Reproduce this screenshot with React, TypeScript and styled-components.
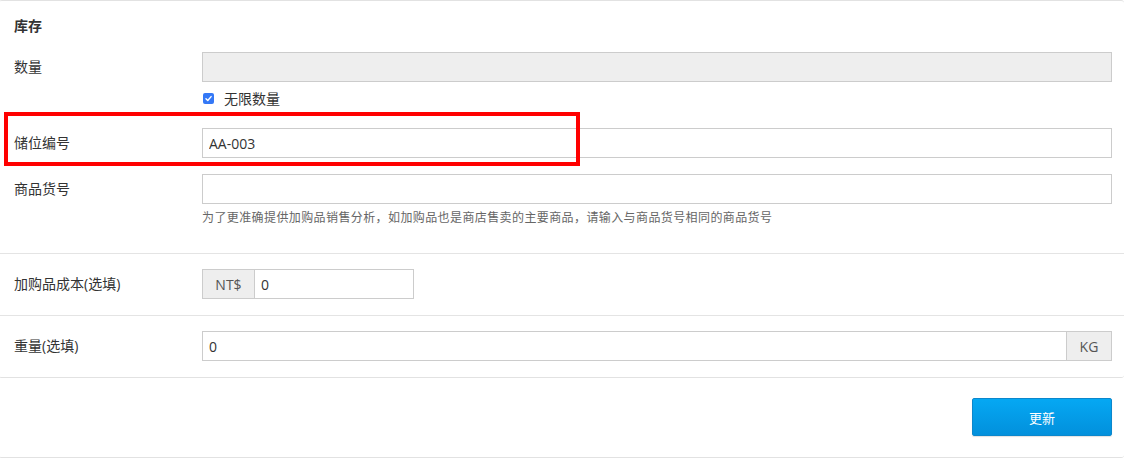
import React from "react";
import styled, { createGlobalStyle } from "styled-components";

const GlobalStyle = createGlobalStyle`
  html, body {
    margin: 0;
    padding: 0;
    background: #ffffff;
  }
  body {
    font-family: "Open Sans", "Noto Sans CJK SC", sans-serif;
    color: #333333;
    font-size: 14px;
  }
  * {
    box-sizing: border-box;
  }
`;

const Page = styled.div`
  position: relative;
  width: 1125px;
  overflow: hidden;
`;

const Card = styled.div`
  margin: 0 1px 0 -1px;
  border-top: 1px solid #e2e2e2;
  border-bottom: 1px solid #e2e2e2;
  border-radius: 3px;
  background: #ffffff;
`;

const Section = styled.div<{ $top?: number; $bottom?: number; $last?: boolean }>`
  padding: ${(p) => p.$top ?? 15}px 12px ${(p) => p.$bottom ?? 16}px 15px;
  border-bottom: ${(p) => (p.$last ? "none" : "1px solid #e4e4e4")};
`;

const Title = styled.div`
  font-weight: 700;
  font-size: 14px;
  line-height: 20px;
  height: 20px;
  margin-bottom: 16px;
  color: #333;
`;

const Row = styled.div<{ $gap?: number; $top?: boolean }>`
  display: flex;
  align-items: ${(p) => (p.$top ? "flex-start" : "center")};
  margin-bottom: ${(p) => p.$gap ?? 0}px;
`;

const Label = styled.div<{ $tall?: boolean }>`
  width: 188px;
  flex-shrink: 0;
  font-size: 14px;
  line-height: ${(p) => (p.$tall ? 30 : 20)}px;
  color: #333;
`;

const Field = styled.div`
  flex: 1;
  display: flex;
  flex-direction: column;
`;

const InputGroup = styled.div<{ $width?: number }>`
  display: flex;
  width: ${(p) => (p.$width ? `${p.$width}px` : "100%")};
  height: 30px;
`;

const Input = styled.input<{ $disabled?: boolean }>`
  flex: 1;
  min-width: 0;
  width: 100%;
  height: 30px;
  border: 1px solid #cccccc;
  background: ${(p) => (p.$disabled ? "#eeeeee" : "#ffffff")};
  padding: 0 6px;
  font-family: "Open Sans", "Noto Sans CJK SC", sans-serif;
  font-size: 14px;
  color: #333;
  outline: none;
  border-radius: 0;
`;

const Addon = styled.div<{ $width: number; $side: "left" | "right" }>`
  width: ${(p) => p.$width}px;
  flex-shrink: 0;
  height: 30px;
  display: flex;
  align-items: center;
  justify-content: center;
  background: #eeeeee;
  border: 1px solid #cccccc;
  ${(p) => (p.$side === "left" ? "border-right: none;" : "border-left: none;")}
  font-size: 14px;
  color: #555;
`;

const CheckRow = styled.label`
  display: flex;
  align-items: center;
  gap: 10px;
  height: 20px;
  margin-top: 6px;
  margin-bottom: 20px;
  padding-left: 1px;
  font-size: 14px;
  color: #333;
`;

const CheckBox = styled.span`
  width: 11px;
  height: 11px;
  border-radius: 2px;
  background: #3478f6;
  display: flex;
  align-items: center;
  justify-content: center;
`;

const Help = styled.div`
  margin-top: 5px;
  font-size: 12px;
  letter-spacing: 0.4px;
  line-height: 18px;
  color: #666;
`;

const Footer = styled.div`
  margin: 0 1px 0 -1px;
  padding: 20px 12px 21px 0;
  border-bottom: 1px solid #e2e2e2;
  border-radius: 3px;
  display: flex;
  justify-content: flex-end;
`;

const Button = styled.button`
  width: 140px;
  height: 38px;
  border: 1px solid #0b87cc;
  border-radius: 2px;
  background: linear-gradient(#05a8f3, #0290dc);
  box-shadow: 0 1px 1px rgba(0, 0, 0, 0.12);
  color: #ffffff;
  font-family: "Open Sans", "Noto Sans CJK SC", sans-serif;
  font-size: 13px;
`;

const Highlight = styled.div`
  position: absolute;
  left: 4px;
  top: 112px;
  width: 576px;
  height: 54px;
  border: 4px solid #ff0000;
  pointer-events: none;
`;

const App = () => {
  return (
    <Page>
      <GlobalStyle />
      <Card>
        <Section $bottom={26}>
          <Title>库存</Title>
          <Row>
            <Label>数量</Label>
            <Field>
              <InputGroup>
                <Input $disabled readOnly />
              </InputGroup>
            </Field>
          </Row>
          <Row>
            <Label />
            <Field>
              <CheckRow>
                <CheckBox>
                  <svg width="9" height="9" viewBox="0 0 10 10">
                    <path
                      d="M2.2 5.2 L4.2 7.2 L7.9 2.9"
                      fill="none"
                      stroke="#fff"
                      strokeWidth="1.6"
                      strokeLinecap="round"
                      strokeLinejoin="round"
                    />
                  </svg>
                </CheckBox>
                无限数量
              </CheckRow>
            </Field>
          </Row>
          <Row $gap={16}>
            <Label>储位编号</Label>
            <Field>
              <InputGroup>
                <Input defaultValue="AA-003" />
              </InputGroup>
            </Field>
          </Row>
          <Row $top>
            <Label $tall>商品货号</Label>
            <Field>
              <InputGroup>
                <Input />
              </InputGroup>
              <Help>
                为了更准确提供加购品销售分析，如加购品也是商店售卖的主要商品，请输入与商品货号相同的商品货号
              </Help>
            </Field>
          </Row>
        </Section>
        <Section>
          <Row>
            <Label>加购品成本(选填)</Label>
            <Field>
              <InputGroup $width={212}>
                <Addon $width={52} $side="left">
                  NT$
                </Addon>
                <Input defaultValue="0" />
              </InputGroup>
            </Field>
          </Row>
        </Section>
        <Section $last>
          <Row>
            <Label>重量(选填)</Label>
            <Field>
              <InputGroup>
                <Input defaultValue="0" />
                <Addon $width={45} $side="right">
                  KG
                </Addon>
              </InputGroup>
            </Field>
          </Row>
        </Section>
      </Card>
      <Footer>
        <Button>更新</Button>
      </Footer>
      <Highlight />
    </Page>
  );
};

export default App;
